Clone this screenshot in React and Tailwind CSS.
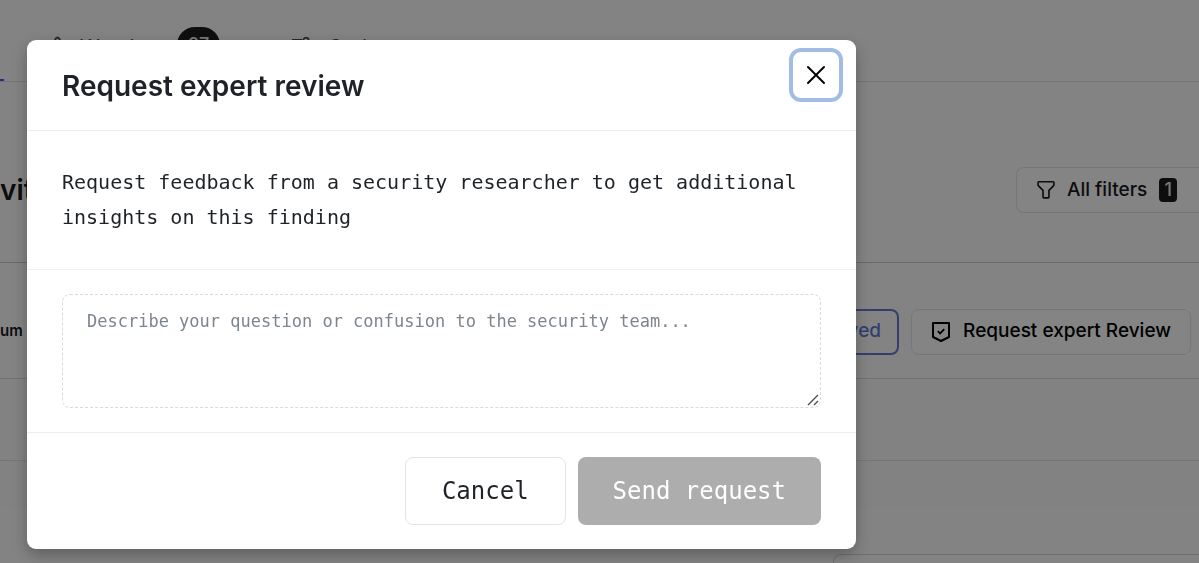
import { useState } from "react"
import { X } from "lucide-react"

function FlameIcon() {
  return (
    <svg width="20" height="24" viewBox="0 0 20 24" fill="none" stroke="currentColor" strokeWidth="1.8" aria-hidden="true">
      <path d="M3 12l4-7q1-2.500 2.500-2.500T12 5l4 7v6H3z" strokeLinejoin="round" />
    </svg>
  )
}

function RulesIcon() {
  return (
    <svg width="20" height="20" viewBox="0 0 20 20" fill="none" stroke="currentColor" strokeWidth="1.8" aria-hidden="true">
      <circle cx="14" cy="3.500" r="2.800" />
      <path d="M0 3h10M0 10h18M0 16h18" />
    </svg>
  )
}

function FunnelIcon() {
  return (
    <svg width="18" height="20" viewBox="0 0 20 20" fill="none" stroke="currentColor" strokeWidth="1.8" strokeLinejoin="round" aria-hidden="true">
      <path d="M2 .9h16q.8 0 .8.8v2.500q0 .7-.5 1.200l-5 5v7.500q0 .8-.8.8h-5q-.8 0-.8-.8v-7.500l-5-5q-.5-.5-.5-1.200V1.700q0-.8.8-.8z" />
    </svg>
  )
}

function ShieldIcon() {
  return (
    <svg width="20" height="22" viewBox="0 0 20 22" fill="none" stroke="currentColor" strokeWidth="2" aria-hidden="true">
      <path d="M2 2h16v14l-8 4-8-4z" strokeLinejoin="round" />
      <path d="M6.800 10.200l2.300 2.200 4.200-4.200" strokeWidth="1.800" />
    </svg>
  )
}

function FindingsPage() {
  return (
    <div className="min-h-screen overflow-hidden bg-[#fcfcfc] text-[#17191d]">
      <nav className="flex h-[82px] items-stretch border-b border-[#e3e3e5] text-xl text-[#4a4c50]">
        <span className="mr-11 w-1 border-b-2 border-[#4a5ed0]" />
        <a href="#warnings" className="flex items-center gap-3 pt-3">
          <FlameIcon />
          Warnings
          <span className="mb-1 -ml-1 flex h-9 w-[43px] items-center justify-center rounded-full bg-[#1c1c1c] text-lg font-medium text-[#e5e5e5]">27</span>
        </a>
        <a href="#code" className="ml-[72px] flex items-center gap-4 pt-3">
          <RulesIcon />
          Code
        </a>
      </nav>

      <header className="flex h-[181px] items-center justify-between border-b border-[#c9c9cf] pt-9">
        <h1 className="text-[28px] font-semibold">vit</h1>
        <button type="button" className="flex h-[46px] w-[183px] items-center rounded-l-lg border border-r-0 border-[#e3e3ea] bg-[#fdfdfd] pl-5 text-[19px] font-medium">
          <FunnelIcon />
          <span className="mx-3 whitespace-nowrap">All filters</span>
          <span className="flex h-6 w-[18px] items-center justify-center rounded bg-[#1c1c1c] text-lg text-[#e5e5e5]">1</span>
        </button>
      </header>

      <div className="flex h-[116px] items-center border-b border-[#dbdbe3] pt-[22px] pr-2 text-[19px] font-medium">
        <span className="mr-auto text-[15px] font-semibold">um</span>
        <button type="button" className="mr-3 h-[46px] rounded-lg border-2 border-[#6478d2] px-4 text-[#6478d2]">Resolved</button>
        <button type="button" className="flex h-[46px] items-center gap-3 rounded-lg border border-[#e3e3ea] bg-[#fdfdfd] px-[19px] whitespace-nowrap text-black">
          <ShieldIcon />
          Request expert Review
        </button>
      </div>

      <div className="h-[82px] border-b border-[#e3e3e5] bg-[#fafafa]" />
      <div className="h-[47px] bg-[#f9f9f9]" />
      <div className="pt-[46px]">
        <div className="ml-auto h-20 w-[366px] rounded-tl-lg border-t border-l border-[#d5d5da]" />
      </div>
    </div>
  )
}

function ReviewDialog() {
  const [message, setMessage] = useState("")

  return (
    <div
      role="dialog"
      aria-modal="true"
      aria-labelledby="review-title"
      className="w-full max-w-[829px] rounded-[9px] bg-white text-[#1f2328] shadow-[0_6px_16px_rgba(0,0,0,0.3)]"
    >
      <div className="flex h-[91px] items-start justify-between border-b border-[#ececee] pt-2 pr-[13px] pl-[35px]">
        <h2 id="review-title" className="pt-5 text-[28px] leading-9 font-semibold">Request expert review</h2>
        <button type="button" aria-label="Close" className="flex size-[54px] items-center justify-center rounded-xl border-4 border-[#a2bde4] text-black">
          <X size={32} strokeWidth={1.5} />
        </button>
      </div>

      <p className="border-b border-[#f0f0f2] px-[35px] py-[34px] font-['DejaVu_Sans_Mono',monospace] text-xl leading-[35px]">
        Request feedback from a security researcher to get additional insights on this finding
      </p>

      <div className="border-b border-[#ececee] px-[35px] py-6">
        <div className="relative">
          <textarea
            aria-label="Question"
            value={message}
            onChange={(e) => setMessage(e.target.value)}
            placeholder="Describe your question or confusion to the security team..."
            className="block h-[114px] w-full resize-none rounded-lg border border-dashed border-[#d9dadd] px-6 py-3 font-['DejaVu_Sans_Mono',monospace] text-[17px] leading-7 outline-none placeholder:text-[#7d858f]"
          />
          <svg className="pointer-events-none absolute right-0.5 bottom-0.5" width="12" height="12" viewBox="0 0 12 12" stroke="#4a4a4a" strokeWidth="1.3" aria-hidden="true">
            <path d="M1 11L11 1M7 11l4-4" />
          </svg>
        </div>
      </div>

      <div className="flex justify-end gap-3 px-[35px] py-6 font-['DejaVu_Sans_Mono',monospace] text-2xl">
        <button type="button" className="h-[68px] rounded-lg border border-[#e4e4e6] px-9">Cancel</button>
        <button type="submit" className="h-[68px] rounded-lg bg-[#adadad] px-[35px] text-white">Send request</button>
      </div>
    </div>
  )
}

export default function App() {
  return (
    <div className="relative h-screen overflow-hidden font-['Inter',sans-serif]">
      <FindingsPage />
      <div className="fixed inset-0 flex items-start bg-black/48 pt-10 pl-[27px]">
        <ReviewDialog />
      </div>
    </div>
  )
}
